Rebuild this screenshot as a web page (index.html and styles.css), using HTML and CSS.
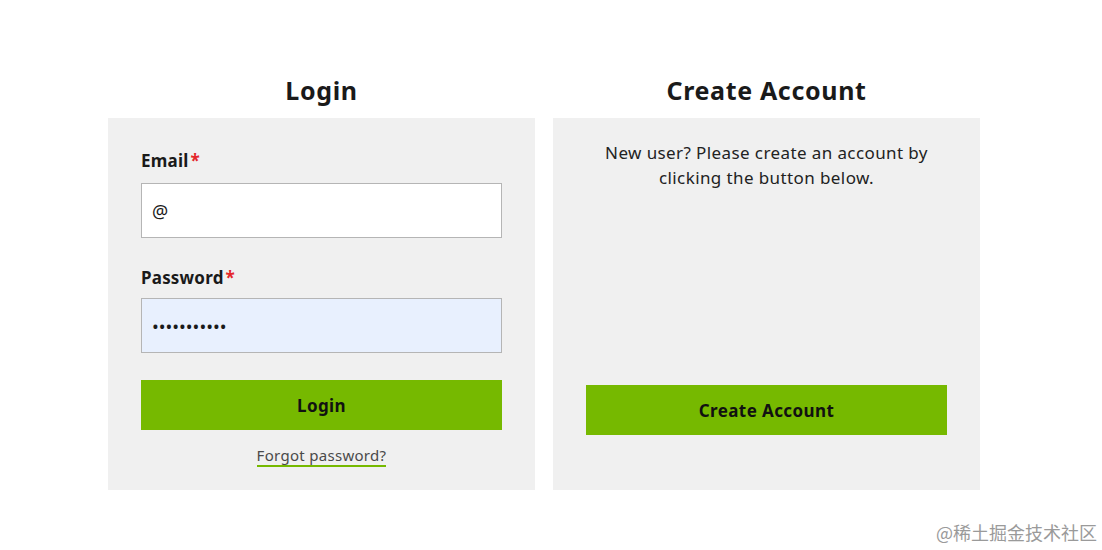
FILE: index.html
```html
<!DOCTYPE html>
<html lang="en">
<head>
<meta charset="utf-8">
<title>Login</title>
<link rel="stylesheet" href="styles.css">
</head>
<body>
<main class="wrap">
  <section class="col">
    <h2 class="title">Login</h2>
    <form class="card login">
      <label class="label" for="email">Email<span class="req">*</span></label>
      <input class="field" id="email" type="text" value="@">
      <label class="label pw" for="pw">Password<span class="req">*</span></label>
      <input class="field filled" id="pw" type="password" value="abcdefghijk">
      <button class="btn" type="button">Login</button>
      <a class="forgot" href="#">Forgot password?</a>
    </form>
  </section>
  <section class="col">
    <h2 class="title">Create Account</h2>
    <div class="card create">
      <p class="info">New user? Please create an account by clicking the button below.</p>
      <button class="btn" type="button">Create Account</button>
    </div>
  </section>
</main>
<div class="mark">@稀土掘金技术社区</div>
</body>
</html>
```
FILE: styles.css
```css
html, body {
  margin: 0;
  padding: 0;
  background: #fff;
}
body {
  font-family: "Noto Sans", "DejaVu Sans", sans-serif;
  color: #1a1a1a;
  width: 1102px;
  height: 550px;
  position: relative;
  overflow: hidden;
}
.wrap {
  display: flex;
  gap: 18px;
  padding: 74px 0 0 108px;
}
.col {
  width: 427px;
  display: flex;
  flex-direction: column;
}
.title {
  margin: 0 0 12px;
  font-size: 25px;
  line-height: 32px;
  font-weight: 700;
  letter-spacing: 0.65px;
  text-align: center;
  color: #1a1a1a;
}
.card {
  background: #f0f0f0;
  flex: 1;
  display: flex;
  flex-direction: column;
  padding: 31px 33px 23px;
  margin: 0;
}
.label {
  font-size: 17px;
  line-height: 24px;
  font-weight: 700;
  letter-spacing: 0.2px;
  margin-bottom: 10px;
}
.label.pw {
  margin-top: 28px;
  margin-bottom: 8px;
}
.req {
  color: #e4262a;
  margin-left: 2px;
}
.field {
  box-sizing: border-box;
  width: 361px;
  height: 55px;
  border: 1px solid #b5b5b5;
  background: #fff;
  padding: 0 10px;
  font-family: "Noto Sans", sans-serif;
  font-size: 18px;
  color: #1a1a1a;
  outline: none;
}
.field.filled {
  background: #e8f0fe;
}
.btn {
  width: 361px;
  height: 50px;
  border: 0;
  background: #76b900;
  font-family: "Noto Sans", sans-serif;
  font-size: 17px;
  font-weight: 700;
  letter-spacing: 0.4px;
  color: #111;
  cursor: pointer;
}
.login .btn {
  margin-top: 27px;
}
.forgot {
  align-self: center;
  margin-top: 15px;
  font-size: 15px;
  line-height: 20px;
  letter-spacing: 0.3px;
  color: #4a4a4a;
  text-decoration: none;
  border-bottom: 2px solid #76b900;
}
.create {
  padding-top: 22px;
  padding-bottom: 55px;
  align-items: center;
}
.info {
  margin: 0;
  width: 345px;
  font-size: 17px;
  line-height: 25px;
  letter-spacing: 0.4px;
  text-align: center;
  color: #222;
}
.create .btn {
  margin-top: auto;
}
.mark {
  position: absolute;
  right: 5px;
  bottom: 5px;
  font-family: "Noto Sans CJK SC", sans-serif;
  font-size: 18px;
  color: #9a9a9a;
}
```
